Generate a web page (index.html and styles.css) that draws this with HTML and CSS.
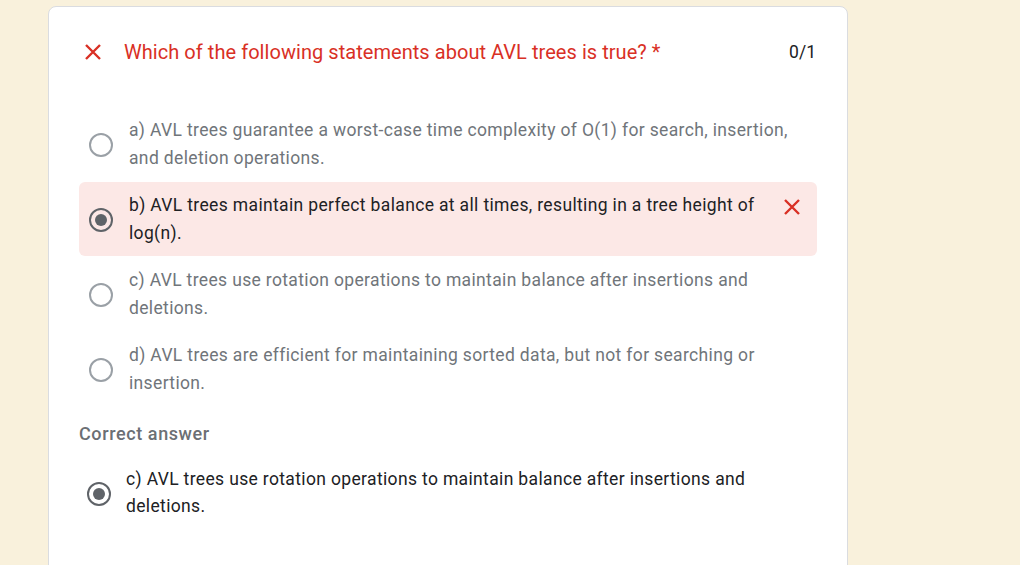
FILE: index.html
```html
<!DOCTYPE html>
<html>
<head>
<meta charset="utf-8">
<link rel="stylesheet" href="styles.css">
</head>
<body>
<div class="card">
  <div class="title-row">
    <svg class="title-x" width="18" height="18" viewBox="0 0 18 18"><path d="M2 2 L16 16 M16 2 L2 16" stroke="#d93025" stroke-width="2.4" fill="none"/></svg>
    <div class="title">Which of the following statements about AVL trees is true? <span class="req">*</span></div>
    <div class="score">0/1</div>
  </div>
  <div class="options">
    <div class="option">
      <span class="radio"></span>
      <div class="opt-text">a) AVL trees guarantee a worst-case time complexity of O(1) for search, insertion, and deletion operations.</div>
    </div>
    <div class="option wrong">
      <span class="radio checked"></span>
      <div class="opt-text">b) AVL trees maintain perfect balance at all times, resulting in a tree height of log(n).</div>
      <svg class="opt-x" width="18" height="18" viewBox="0 0 18 18"><path d="M2 2 L16 16 M16 2 L2 16" stroke="#d93025" stroke-width="2.4" fill="none"/></svg>
    </div>
    <div class="option">
      <span class="radio"></span>
      <div class="opt-text">c) AVL trees use rotation operations to maintain balance after insertions and deletions.</div>
    </div>
    <div class="option">
      <span class="radio"></span>
      <div class="opt-text">d) AVL trees are efficient for maintaining sorted data, but not for searching or insertion.</div>
    </div>
  </div>
  <div class="correct-label">Correct answer</div>
  <div class="correct-option">
    <span class="radio checked"></span>
    <div class="opt-text">c) AVL trees use rotation operations to maintain balance after insertions and deletions.</div>
  </div>
</div>
</body>
</html>
```
FILE: styles.css
```css
html, body {
  margin: 0;
  padding: 0;
  background: #f9f1dc;
  font-family: Roboto, "Liberation Sans", sans-serif;
}
.card {
  margin: 6px 0 0 48px;
  width: 800px;
  height: 600px;
  background: #fff;
  border: 1px solid #dadce0;
  border-radius: 8px;
  box-sizing: border-box;
  padding: 33px 30px 0 30px;
}
.title-row {
  display: flex;
  align-items: center;
  height: 24px;
}
.title-x {
  margin-left: 5px;
  flex: none;
}
.title {
  margin-left: 22px;
  flex: 1;
  color: #d93025;
  font-size: 20px;
  letter-spacing: 0.05px;
  line-height: 24px;
}
.score {
  color: #202124;
  font-size: 17.5px;
  margin-right: 1px;
}
.options {
  margin-top: 43px;
  display: flex;
  flex-direction: column;
  gap: 1px;
}
.option {
  display: flex;
  align-items: center;
  min-height: 74px;
  box-sizing: border-box;
  padding: 9px 16px 9px 10px;
  border-radius: 6px;
}
.option .opt-text {
  width: 670px;
  color: #70757a;
  font-size: 17.5px;
  letter-spacing: 0.35px;
  line-height: 28px;
  margin-left: 16px;
  align-self: flex-start;
}
.option.wrong {
  background: #fce8e6;
}
.option.wrong .opt-text {
  color: #202124;
}
.opt-x {
  flex: none;
  margin-left: auto;
  align-self: flex-start;
  margin-top: 7px;
}
.radio {
  flex: none;
  width: 24px;
  height: 24px;
  box-sizing: border-box;
  border: 2.5px solid #9aa0a6;
  border-radius: 50%;
  display: flex;
  align-items: center;
  justify-content: center;
  margin-top: 2px;
}
.radio.checked {
  border-color: #5f6368;
}
.radio.checked::after {
  content: "";
  width: 12px;
  height: 12px;
  border-radius: 50%;
  background: #5f6368;
}
.correct-label {
  margin-top: 16px;
  color: #6b6f74;
  font-size: 18px;
  letter-spacing: 0.6px;
  font-weight: 500;
  line-height: 24px;
}
.correct-option {
  display: flex;
  align-items: center;
  margin-top: 20px;
  padding-left: 8px;
}
.correct-option .opt-text {
  margin-left: 15px;
  color: #202124;
  font-size: 17.5px;
  letter-spacing: 0.35px;
  line-height: 27px;
  width: 670px;
}
```
